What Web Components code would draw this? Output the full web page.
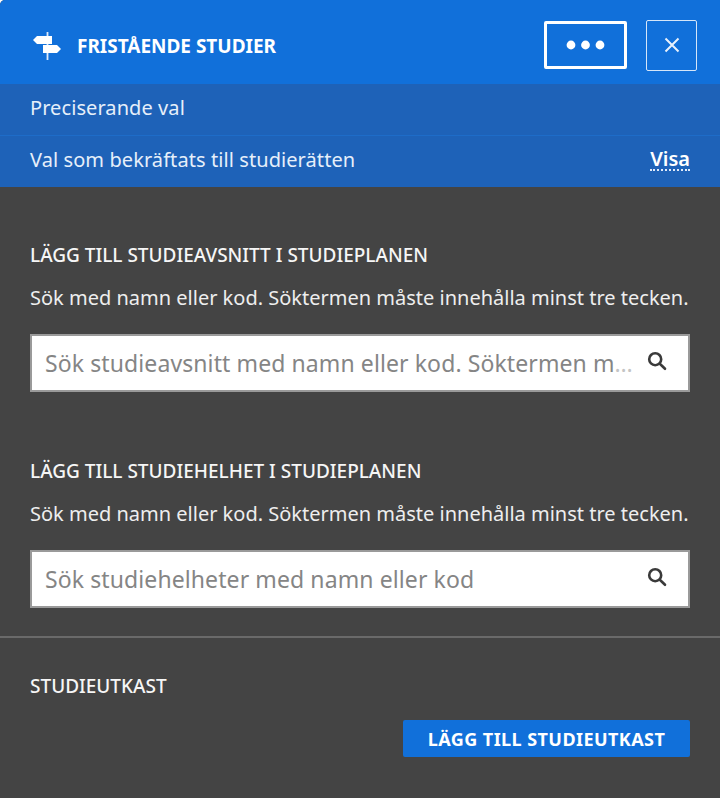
<!DOCTYPE html>
<html lang="sv"><head><meta charset="utf-8"><title>Fristående studier</title>
<style>
html,body{margin:0;padding:0;background:#fff}
body{font-family:"Noto Sans","Open Sans",sans-serif;width:720px;height:798px;overflow:hidden}
</style></head><body>
<study-panel>
  <panel-header title-text="FRISTÅENDE STUDIER"></panel-header>
  <info-row>Preciserande val</info-row>
  <info-row divider action="Visa">Val som bekräftats till studierätten</info-row>
  <panel-body>
    <search-section style="margin-top:55px" heading="LÄGG TILL STUDIEAVSNITT I STUDIEPLANEN" hint="Sök med namn eller kod. Söktermen måste innehålla minst tre tecken." placeholder="Sök studieavsnitt med namn eller kod. Söktermen m" fade="…"></search-section>
    <search-section style="margin-top:66px" heading="LÄGG TILL STUDIEHELHET I STUDIEPLANEN" hint="Sök med namn eller kod. Söktermen måste innehålla minst tre tecken." placeholder="Sök studiehelheter med namn eller kod"></search-section>
    <draft-section heading="STUDIEUTKAST" action="LÄGG TILL STUDIEUTKAST"></draft-section>
  </panel-body>
</study-panel>
<script>
const font='"Noto Sans","Open Sans",sans-serif';
customElements.define('study-panel',class extends HTMLElement{constructor(){super();this.attachShadow({mode:'open'}).innerHTML=`<style>:host{display:flex;flex-direction:column;width:720px;height:798px;background:#444;border-top-left-radius:5px;overflow:hidden;font-family:${font}}</style><slot></slot>`}});
customElements.define('panel-header',class extends HTMLElement{connectedCallback(){this.attachShadow({mode:'open'}).innerHTML=`<style>
:host{display:flex;align-items:center;height:84px;box-sizing:border-box;background:#1170da;color:#fff;padding:6px 23px 0 33px}
svg.sign{width:30px;height:30px;flex:none;margin:2px 14px 0 0}
h1{margin:2px 0 0;flex:1;font-size:19px;font-weight:700;letter-spacing:-.02px;white-space:nowrap}
.b{box-sizing:border-box;display:flex;align-items:center;justify-content:center;background:none;color:#fff;padding:0;border-radius:2px}
.more{width:83px;height:48px;border:3px solid #fff;margin-right:19px}
.close{width:51px;height:51px;border:1.5px solid #d6e6f9}
</style>
<svg class="sign" viewBox="0 0 30 30" fill="#fff"><rect x="13.6" y="1" width="1.8" height="28" fill="#dfeafa"/><path d="M4 5h15v8H4L0 9z"/><path d="M10 14h14l4 4-4 4H10z"/></svg>
<h1>${this.getAttribute('title-text')}</h1>
<div class="b more"><svg width="40" height="12" viewBox="0 0 40 12" fill="#fff"><circle cx="5" cy="6" r="4.4"/><circle cx="19.5" cy="6" r="4.4"/><circle cx="34" cy="6" r="4.4"/></svg></div>
<div class="b close"><svg width="18" height="18" viewBox="0 0 18 18" stroke="#e8f1fc" stroke-width="2" fill="none"><path d="M2.5 2.5l13 13M15.5 2.5l-13 13"/></svg></div>`}});
customElements.define('info-row',class extends HTMLElement{connectedCallback(){const a=this.getAttribute('action'),d=this.hasAttribute('divider');this.attachShadow({mode:'open'}).innerHTML=`<style>
:host{display:flex;align-items:center;justify-content:space-between;height:${d?52:51}px;box-sizing:border-box;background:#1e62b8;color:#e6effa;padding:0 30px 4px;font-size:20px;letter-spacing:.08px;${d?'border-top:1px solid #1e6cc8;':''}}
.a{font-weight:600;color:#fff;border-bottom:2px dotted #dfeafa;line-height:21px;letter-spacing:0}
</style><span><slot></slot></span>${a?`<span class="a">${a}</span>`:''}`}});
customElements.define('panel-body',class extends HTMLElement{constructor(){super();this.attachShadow({mode:'open'}).innerHTML=`<style>:host{display:block;flex:1;color:#fff}</style><slot></slot>`}});
customElements.define('search-section',class extends HTMLElement{connectedCallback(){const f=this.getAttribute('fade');this.attachShadow({mode:'open'}).innerHTML=`<style>
:host{display:block;padding:0 30px}
h2{margin:0;font-size:19px;line-height:26px;font-weight:500;color:#f6f6f6;white-space:nowrap}
p{margin:17px 0 23px;font-size:20px;line-height:26px;color:#eee;white-space:nowrap}
.box{display:flex;align-items:center;height:58px;box-sizing:border-box;background:#fff;border:2px solid #9a9a9a;padding:0 21px 0 13px}
.t{flex:1;min-width:0;font-size:23px;letter-spacing:.1px;color:#858585;white-space:nowrap}
.f{color:#c4c4c4;letter-spacing:-1px}
svg{flex:none;width:20px;height:20px;margin-top:-4px}
</style><h2>${this.getAttribute('heading')}</h2><p>${this.getAttribute('hint')}</p>
<div class="box"><span class="t">${this.getAttribute('placeholder')}${f?`<span class="f">${f}</span>`:''}</span><svg viewBox="0 0 20 20" fill="none" stroke="#3a3a3a" stroke-width="2.6" stroke-linecap="round"><circle cx="8.2" cy="8.2" r="6"/><path d="M12.8 12.8l5.2 5"/></svg></div>`}});
customElements.define('draft-section',class extends HTMLElement{connectedCallback(){this.attachShadow({mode:'open'}).innerHTML=`<style>
:host{display:block;margin-top:28px;border-top:2px solid #6a6a6a;padding:35px 30px 0}
h2{margin:0;font-size:19px;line-height:26px;font-weight:500;color:#f6f6f6}
.row{display:flex;justify-content:flex-end;margin-top:21px}
.btn{display:flex;align-items:center;justify-content:center;width:287px;height:37px;background:#1170da;border-radius:2px;color:#fff;font-size:18px;font-weight:700;letter-spacing:.43px;white-space:nowrap}
</style><h2>${this.getAttribute('heading')}</h2><div class="row"><div class="btn">${this.getAttribute('action')}</div></div>`}});
</script>
</body></html>
